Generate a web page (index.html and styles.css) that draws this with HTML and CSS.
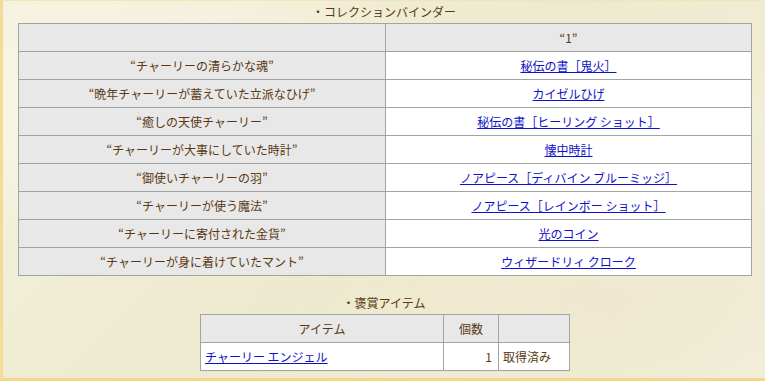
FILE: index.html
```html
<!DOCTYPE html>
<html lang="ja">
<head>
<meta charset="utf-8">
<link rel="stylesheet" href="styles.css">
</head>
<body>
<div class="frame">
  <div class="title">・コレクションバインダー</div>
  <table class="binder">
    <tr class="head"><td class="name"></td><td class="item">“1”</td></tr>
    <tr><td class="name">“チャーリーの清らかな魂”</td><td class="item"><a href="#">秘伝の書［鬼火］</a></td></tr>
    <tr><td class="name">“晩年チャーリーが蓄えていた立派なひげ”</td><td class="item"><a href="#">カイゼルひげ</a></td></tr>
    <tr><td class="name">“癒しの天使チャーリー”</td><td class="item"><a href="#">秘伝の書［ヒーリング ショット］</a></td></tr>
    <tr><td class="name">“チャーリーが大事にしていた時計”</td><td class="item"><a href="#">懐中時計</a></td></tr>
    <tr><td class="name">“御使いチャーリーの羽”</td><td class="item"><a href="#">ノアピース［ディバイン ブルーミッジ］</a></td></tr>
    <tr><td class="name">“チャーリーが使う魔法”</td><td class="item"><a href="#">ノアピース［レインボー ショット］</a></td></tr>
    <tr><td class="name">“チャーリーに寄付された金貨”</td><td class="item"><a href="#">光のコイン</a></td></tr>
    <tr><td class="name">“チャーリーが身に着けていたマント”</td><td class="item"><a href="#">ウィザードリィ クローク</a></td></tr>
  </table>
  <div class="title title2">・褒賞アイテム</div>
  <table class="reward">
    <tr class="head"><td class="c1">アイテム</td><td class="c2">個数</td><td class="c3"></td></tr>
    <tr><td class="c1 left"><a href="#">チャーリー エンジェル</a></td><td class="c2 num">1</td><td class="c3 left">取得済み</td></tr>
  </table>
</div>
</body>
</html>
```

FILE: styles.css
```css
html, body {
  margin: 0;
  padding: 0;
}
body {
  width: 765px;
  height: 381px;
  overflow: hidden;
  background: #f3f0dc;
  font-family: "Noto Sans CJK JP", "DejaVu Sans", sans-serif;
  font-size: 12px;
  color: #5a3812;
}
.frame {
  box-sizing: border-box;
  width: 765px;
  height: 381px;
  border-left: 3px solid #f3dc95;
  border-top: 1px solid #f1e6b8;
  border-bottom: 3px solid #f3d88a;
  background:
    radial-gradient(ellipse at 20% 30%, rgba(255,255,245,0.6), rgba(255,255,245,0) 40%),
    radial-gradient(ellipse at 80% 80%, rgba(235,228,200,0.5), rgba(235,228,200,0) 45%),
    linear-gradient(135deg, #f4f1de, #eeeacf 50%, #f3f0dc);
  padding-top: 3px;
}
.title {
  text-align: center;
  height: 19px;
  line-height: 16px;
}
.binder, .reward {
  border-collapse: collapse;
  table-layout: fixed;
}
.binder {
  width: 734px;
  margin-left: 15px;
}
.binder td, .reward td {
  border: 1px solid #a3a3a3;
  height: 27px;
  padding: 0;
  text-align: center;
  line-height: 14px;
}
.binder .name {
  width: 366px;
  background: #e8e8e8;
}
.binder .item {
  background: #ffffff;
}
.binder .head td {
  background: #e8e8e8;
}
.title2 {
  margin-top: 19px;
  height: 19px;
}
.reward {
  width: 370px;
  margin-left: 197px;
}
.reward .head td {
  background: #e8e8e8;
}
.reward td {
  background: #ffffff;
}
.reward .c1 { width: 242px; }
.reward .c2 { width: 54px; }
.reward .c3 { width: 70px; }
.reward .left { text-align: left; padding-left: 4px; }
.reward .num { text-align: right; padding-right: 6px; }
a {
  color: #1010c8;
  text-decoration: underline;
}
```
